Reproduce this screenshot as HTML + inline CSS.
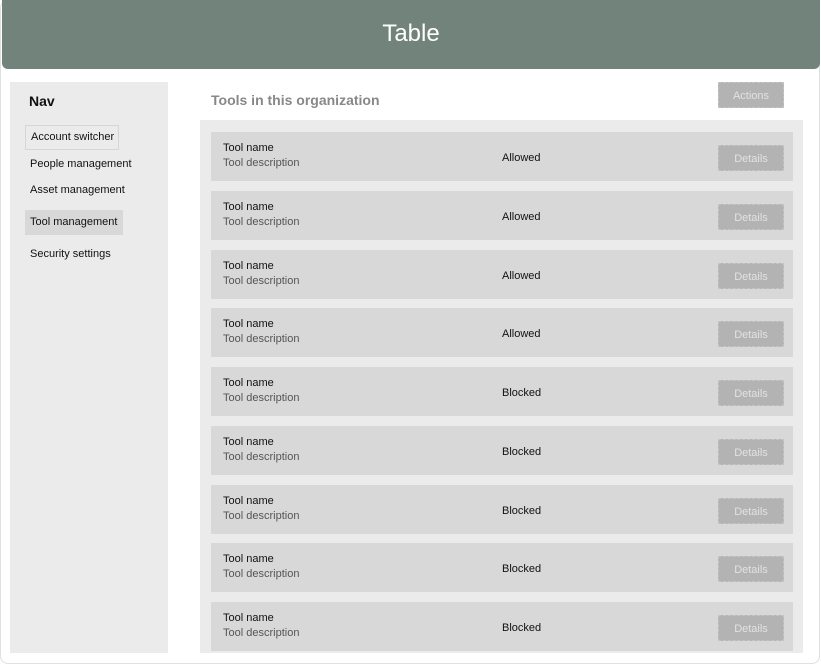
<!DOCTYPE html>
<html><head><style>
*{margin:0;padding:0;box-sizing:border-box}
body{width:821px;height:665px;background:#fff;font-family:"Liberation Sans",sans-serif;position:relative;overflow:hidden}
.card{position:absolute;left:0;top:0;width:820px;height:664px;border:1px solid #e0e0e0;border-radius:8px}
.hdr{position:absolute;left:2px;top:0;width:818px;height:69px;background:#72837c;border-radius:0 0 6px 6px;color:#fff;font-size:24px;text-align:center;line-height:68px}
.nav{position:absolute;left:10px;top:82px;width:158px;height:571px;background:#ebebeb}
.nav h3{position:absolute;left:19px;top:11px;font-size:14px;font-weight:bold;color:#111}
.ni{position:absolute;left:15px;font-size:11px;color:#111;padding:0 5px;line-height:25px;height:25px;white-space:nowrap}
.title{position:absolute;left:211px;top:92px;font-size:14px;font-weight:bold;color:#888}
.btn{position:absolute;left:718px;width:66px;height:26px;background:#b3b3b3;color:#e2e2e2;font-size:11px;text-align:center;line-height:26px;border:1px dashed #c4c4c4}
.tbl{position:absolute;left:200px;top:120px;width:603px;height:533px;background:#ebebeb}
.row{position:absolute;left:211px;width:582px;height:49px;background:#d8d8d8;font-size:11px}
.row .n{position:absolute;left:12px;top:10px;color:#111}
.row .d{position:absolute;left:12px;top:25px;color:#555}
.row .s{position:absolute;left:291px;top:20px;color:#111}
.row .btn{left:507px;top:13px}
</style></head><body>
<div class="card"></div>
<div class="hdr">Table</div>
<div class="nav"><h3>Nav</h3>
<div class="ni" style="top:43px;border:1px solid #d6d6d6;width:94px;line-height:23px">Account switcher</div>
<div class="ni" style="top:70px">People management</div>
<div class="ni" style="top:96px">Asset management</div>
<div class="ni" style="top:128px;background:#d8d8d8;width:98px">Tool management</div>
<div class="ni" style="top:160px">Security settings</div>
</div>
<div class="title">Tools in this organization</div>
<div class="btn" style="top:82px">Actions</div>
<div class="tbl"></div>
<div class="row" style="top:132px"><div class="n">Tool name</div><div class="d">Tool description</div><div class="s">Allowed</div><div class="btn">Details</div></div>
<div class="row" style="top:191px"><div class="n">Tool name</div><div class="d">Tool description</div><div class="s">Allowed</div><div class="btn">Details</div></div>
<div class="row" style="top:250px"><div class="n">Tool name</div><div class="d">Tool description</div><div class="s">Allowed</div><div class="btn">Details</div></div>
<div class="row" style="top:308px"><div class="n">Tool name</div><div class="d">Tool description</div><div class="s">Allowed</div><div class="btn">Details</div></div>
<div class="row" style="top:367px"><div class="n">Tool name</div><div class="d">Tool description</div><div class="s">Blocked</div><div class="btn">Details</div></div>
<div class="row" style="top:426px"><div class="n">Tool name</div><div class="d">Tool description</div><div class="s">Blocked</div><div class="btn">Details</div></div>
<div class="row" style="top:485px"><div class="n">Tool name</div><div class="d">Tool description</div><div class="s">Blocked</div><div class="btn">Details</div></div>
<div class="row" style="top:543px"><div class="n">Tool name</div><div class="d">Tool description</div><div class="s">Blocked</div><div class="btn">Details</div></div>
<div class="row" style="top:602px"><div class="n">Tool name</div><div class="d">Tool description</div><div class="s">Blocked</div><div class="btn">Details</div></div>
</body></html>
